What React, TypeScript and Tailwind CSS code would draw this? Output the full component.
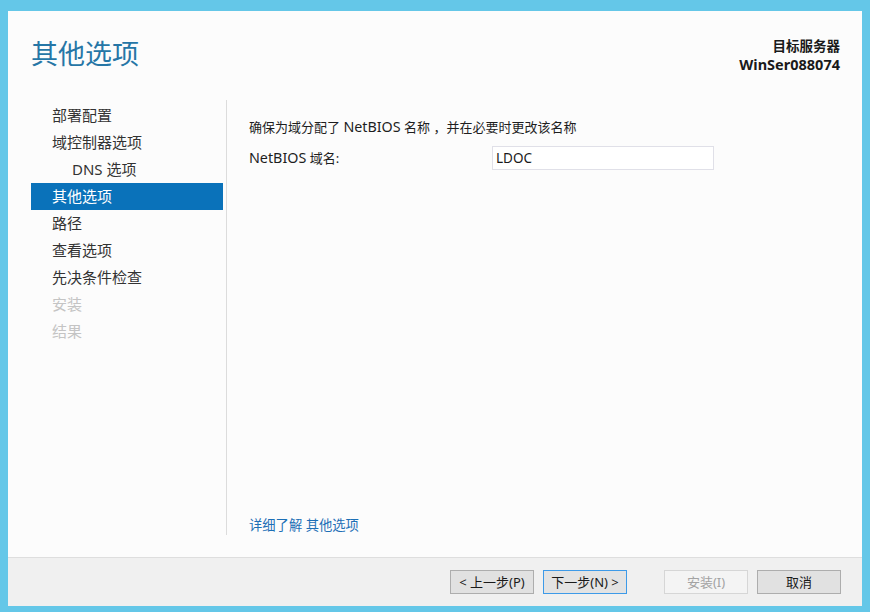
const FONT = { fontFamily: '"Noto Sans", "Noto Sans CJK SC", sans-serif' };

const steps = [
  { label: '部署配置', indent: false, state: 'done' },
  { label: '域控制器选项', indent: false, state: 'done' },
  { label: 'DNS 选项', indent: true, state: 'done' },
  { label: '其他选项', indent: false, state: 'active' },
  { label: '路径', indent: false, state: 'done' },
  { label: '查看选项', indent: false, state: 'done' },
  { label: '先决条件检查', indent: false, state: 'done' },
  { label: '安装', indent: false, state: 'disabled' },
  { label: '结果', indent: false, state: 'disabled' },
];

function WizButton({ children, variant = 'normal' }: { children: React.ReactNode; variant?: 'normal' | 'focus' | 'disabled' }) {
  const cls =
    variant === 'focus'
      ? 'border-[#3d9ae8] bg-[#e3e3e3] text-[#1a1a1a]'
      : variant === 'disabled'
        ? 'border-[#d6d6d6] bg-[#f4f4f4] text-[#a3a3a3]'
        : 'border-[#adadad] bg-[#e1e1e1] text-[#1a1a1a]';
  return (
    <button type="button" className={`h-[24px] w-[84px] border text-[13px] leading-none flex items-center justify-center ${cls}`}>
      {children}
    </button>
  );
}

export default function App() {
  return (
    <div style={FONT} className="w-[870px] h-[612px] bg-[#64c7e8] pt-[11px] px-[8px] pb-[6px] flex">
      <div className="flex-1 flex flex-col bg-[#fcfcfc]">
        {/* header */}
        <div className="h-[89px] flex justify-between pl-[23px] pr-[22px]">
          <h1 className="mt-[26px] text-[27px] leading-[34px] font-normal text-[#2676a6]">其他选项</h1>
          <div className="mt-[26px] text-right font-bold leading-[18px] text-[#1a1a1a]">
            <div className="text-[13.5px]">目标服务器</div>
            <div className="text-[14.5px]">WinSer088074</div>
          </div>
        </div>

        {/* body */}
        <div className="flex-1 flex">
          <nav className="w-[218px] pt-[2px] pl-[23px] pr-[3px]">
            {steps.map((s) => (
              <div
                key={s.label}
                className={`h-[27px] flex items-center text-[15px] ${s.indent ? 'pl-[41px]' : 'pl-[21px]'} ${
                  s.state === 'active'
                    ? 'bg-[#0a72ba] text-white'
                    : s.state === 'disabled'
                      ? 'text-[#c4c4c4]'
                      : 'text-[#333333]'
                }`}
              >
                {s.label}
              </div>
            ))}
          </nav>

          <div className="flex-1 flex flex-col">
            <div className="h-[435px] border-l border-[#dcdcdc] pl-[22px] pt-[18px] pb-[1px] flex flex-col text-[13px] text-[#1e1e1e]">
              <p className="leading-[18px]">
                确保为域分配了 <span className="text-[14.3px]">NetBIOS</span> 名称 ，并在必要时更改该名称
              </p>
              <div className="mt-[10px] flex items-center">
                <span className="w-[243px] leading-[18px]">
                  <span className="text-[14.3px]">NetBIOS</span> 域名:
                </span>
                <div className="h-[24px] w-[222px] border border-[#e0e0e8] bg-white flex items-center px-[3px] text-[13.5px] text-[#1a1a1a]">
                  LDOC
                </div>
              </div>
              <a href="#" className="mt-auto text-[13.3px] leading-[18px] text-[#1c6fb6]">
                详细了解 其他选项
              </a>
            </div>
          </div>
        </div>

        {/* footer */}
        <div className="h-[49px] border-t border-[#dedede] bg-[#f0f0f0] flex items-start justify-end pt-[12px] pr-[21px]">
          <div className="flex">
            <WizButton>&lt; 上一步(P)</WizButton>
            <div className="ml-[9px]">
              <WizButton variant="focus">下一步(N) &gt;</WizButton>
            </div>
            <div className="ml-[37px]">
              <WizButton variant="disabled">安装(I)</WizButton>
            </div>
            <div className="ml-[9px]">
              <WizButton>取消</WizButton>
            </div>
          </div>
        </div>
      </div>
    </div>
  );
}
